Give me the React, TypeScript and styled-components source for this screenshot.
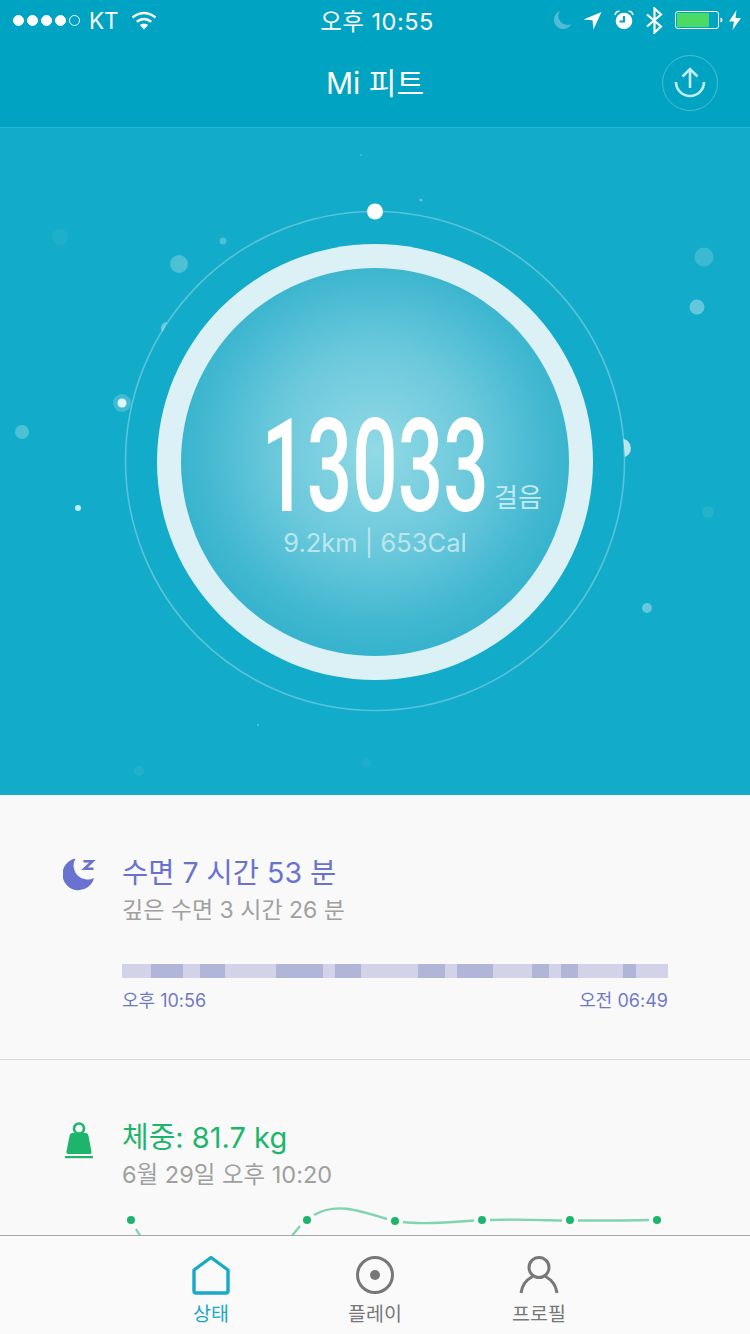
import React from "react";
import styled, { createGlobalStyle } from "styled-components";

const Global = createGlobalStyle`
  html, body { margin: 0; padding: 0; background: #f9f9f9; }
  * { box-sizing: border-box; }
  body { font-family: Inter, "Noto Sans CJK KR", "Liberation Sans", sans-serif; }
`;

const Page = styled.div`
  width: 750px; height: 1334px; display: flex; flex-direction: column; overflow: hidden; background: #f9f9f9;
`;
const Header = styled.header`
  height: 128px; background: #00a3c1; border-bottom: 1px solid #2fb6d2; color: #fff; flex: none;
`;
const StatusBar = styled.div`
  height: 40px; display: grid; grid-template-columns: 1fr auto 1fr; align-items: center; padding: 0 9px 0 13px;
  font-size: 23.5px;
`;
const StatusLeft = styled.div`display: flex; align-items: center;`;
const Signal = styled.div`display: flex; gap: 3px; margin-right: 9px;`;
const Dot = styled.span<{ $off?: boolean }>`
  width: 11px; height: 11px; border-radius: 50%;
  background: ${p => (p.$off ? "transparent" : "#fff")};
  border: 1px solid #fff;
`;
const Carrier = styled.span`margin-right: 12px; font-size: 22.5px;`;
const Clock = styled.div`letter-spacing: 0.5px;`;
const StatusRight = styled.div`display: flex; align-items: center; justify-content: flex-end;`;
const TitleRow = styled.div`
  height: 87px; position: relative; display: flex; align-items: center; justify-content: center; padding-bottom: 6px;
`;
const Title = styled.h1`margin: 0; font-size: 30px; font-weight: 400;`;
const UploadButton = styled.button`
  position: absolute; right: 32px; top: 15px; width: 56px; height: 56px; border-radius: 50%;
  border: 1px solid #4dbdd5; background: transparent; padding: 0; display: flex; align-items: center; justify-content: center;
`;

const Hero = styled.section`
  height: 667px; flex: none; background: #12abc9; position: relative; display: flex; align-items: center; justify-content: center;
`;
const Particles = styled.svg`position: absolute; inset: 0; width: 750px; height: 667px;`;
const Ring = styled.div`
  position: relative; width: 436px; height: 436px; border-radius: 50%; background: #dcf1f6; padding: 24px; margin-top: 1px;
`;
const Dial = styled.div`
  width: 388px; height: 388px; border-radius: 50%;
  background: radial-gradient(circle 205px at 50% 47%, #92d9e5 0%, #6ac8db 50%, #41b7d0 85%, #36b3cd 100%);
  display: flex; flex-direction: column; align-items: center; padding-top: 149px; color: #fff;
`;
const StepsRow = styled.div`
  width: 100%; display: grid; grid-template-columns: 1fr 224px 1fr; align-items: end; height: 100px;
`;
const Steps = styled.div`
  grid-column: 2; width: 224px; height: 100px; display: flex; justify-content: center; align-items: center;
  font-family: Roboto, sans-serif; font-weight: 500; font-size: 130px; line-height: 100px;
  transform: scaleX(0.615); white-space: nowrap;
`;
const StepsUnit = styled.div`
  font-size: 26px; color: #c5ebf2; padding-left: 7px; line-height: 30px; padding-bottom: 4px; white-space: nowrap;
`;
const Stats = styled.div`
  font-size: 25.5px; color: #bce6ee; margin-top: 11px; line-height: 30px; white-space: nowrap;
`;

const Content = styled.main`flex: 1; min-height: 0; overflow: hidden;`;
const Card = styled.article<{ $divider?: boolean }>`
  display: grid; grid-template-columns: 58px 1fr; padding: 60px 82px 0 64px;
  ${p => (p.$divider ? "border-bottom: 1px solid #d8d8d8; height: 265px;" : "")}
`;
const IconCell = styled.div`margin: 2px 0 0 -1px;`;
const CardTitle = styled.h2<{ $color: string; $size: number }>`
  margin: 0; font-size: ${p => p.$size}px; font-weight: 400; line-height: 36px; color: ${p => p.$color};
`;
const CardSub = styled.p<{ $size: number }>`
  margin: 3px 0 0; font-size: ${p => p.$size}px; line-height: 32px; color: #a0a0a0;
`;
const SleepBar = styled.div`display: flex; height: 14px; width: 546px; margin-top: 38px;`;
const SleepSeg = styled.span<{ $deep: boolean }>`
  display: block; background: ${p => (p.$deep ? "#b1b5d7" : "#d2d3e8")};
`;
const TimeRow = styled.div`
  width: 546px; display: flex; justify-content: space-between; margin-top: 11px;
  font-size: 18px; line-height: 24px; color: #7079c6;
`;
const ChartWrap = styled.div`grid-column: 1 / 3; margin: 14px 0 0 -64px;`;
const Chart = styled.svg`display: block; width: 750px; height: 60px;`;

const TabBar = styled.nav`
  height: 99px; flex: none; background: #fafafa; border-top: 1px solid #a8a8a8; display: flex; justify-content: center;
  padding-top: 19px;
`;
const Tab = styled.div<{ $active?: boolean }>`
  width: 164px; display: flex; flex-direction: column; align-items: center;
  color: ${p => (p.$active ? "#18a9c6" : "#777")};
`;
const TabLabel = styled.span`font-size: 19.5px; line-height: 26px; margin-top: 6px;`;

const PARTICLES: [number, number, number, string, number][] = [
  [60, 237, 8, "#fff", 0.05], [223, 241, 3.5, "#fff", 0.25], [179, 264, 9, "#fff", 0.25],
  [122, 403, 9, "#fff", 0.2], [122, 403, 4.5, "#fff", 0.85], [22, 432, 7, "#fff", 0.25],
  [78, 508, 3, "#c8f3fa", 0.95], [704, 257, 9.5, "#fff", 0.18], [697, 307, 7.5, "#fff", 0.35],
  [708, 512, 6, "#fff", 0.08], [647, 608, 5, "#fff", 0.35], [421, 200, 1.5, "#fff", 0.35],
  [361, 155, 0.8, "#fff", 0.4], [258, 725, 0.8, "#fff", 0.6], [139, 771, 5, "#fff", 0.07],
  [366, 763, 5, "#fff", 0.04],
];

const SLEEP = [
  [29, 0], [32, 1], [17, 0], [25, 1], [51, 0], [47, 1], [12, 0], [26, 1], [57, 0], [27, 1], [12, 0],
  [36, 1], [39, 0], [17, 1], [12, 0], [17, 1], [45, 0], [13, 1], [32, 0],
];

const MoonIcon = () => (
  <svg width="34" height="34" viewBox="0 0 34 34" style={{ display: "block" }}>
    <path d="M12.5 1.5 A16 16 0 1 0 31 21 A14 14 0 0 1 12.5 1.5 Z" fill="#6a72cf" />
    <path d="M20.5 4.2 H29.5 L21.5 11.8 H30.5" fill="none" stroke="#6a72cf" strokeWidth="2.6" />
  </svg>
);
const WeightIcon = () => (
  <svg width="30" height="38" viewBox="0 0 30 38" style={{ display: "block", marginLeft: 2 }}>
    <circle cx="14" cy="6.5" r="5" fill="none" stroke="#1db56c" strokeWidth="2.6" />
    <path d="M7.5 11 H20.5 Q23 11 23.5 14 L26.5 29.5 Q27 32 24.5 32 H3.5 Q1 32 1.5 29.5 L4.5 14 Q5 11 7.5 11 Z" fill="#1db56c" />
    <rect x="0" y="34" width="28" height="2.2" fill="#1db56c" />
  </svg>
);

export default function App() {
  return (
    <Page>
      <Global />
      <Header>
        <StatusBar>
          <StatusLeft>
            <Signal>
              <Dot /><Dot /><Dot /><Dot /><Dot $off />
            </Signal>
            <Carrier>KT</Carrier>
            <svg width="26" height="20" viewBox="0 0 26 20" style={{ marginTop: 2 }}>
              <path d="M13 18.5 L8.8 14 Q13 10.8 17.2 14 Z" fill="#fff" />
              <path d="M5.8 10.8 Q13 5 20.2 10.8" fill="none" stroke="#fff" strokeWidth="2.4" />
              <path d="M1.5 6.5 Q13 -2.4 24.5 6.5" fill="none" stroke="#fff" strokeWidth="2.4" />
            </svg>
          </StatusLeft>
          <Clock>오후 10:55</Clock>
          <StatusRight>
            <svg width="20" height="20" viewBox="0 0 20 20" style={{ marginRight: 11 }}>
              <path d="M8 1 A9.3 9.3 0 1 0 19.5 14 A9 9 0 0 1 8 1 Z" fill="#4fbcd6" />
            </svg>
            <svg width="19" height="19" viewBox="0 0 19 19" style={{ marginRight: 12 }}>
              <path d="M18.5 1 L10.5 18.5 L9.5 9.3 L0.5 8.5 Z" fill="#fff" />
            </svg>
            <svg width="20" height="20" viewBox="0 0 20 20" style={{ marginRight: 12 }}>
              <circle cx="10" cy="11" r="8.3" fill="#fff" />
              <path d="M10 6 V11.5 H5.5" fill="none" stroke="#00a3c1" strokeWidth="2" />
              <path d="M1 5 Q2 1 5.5 1.2 M19 5 Q18 1 14.5 1.2" fill="none" stroke="#fff" strokeWidth="1.6" />
            </svg>
            <svg width="17" height="27" viewBox="0 0 17 27" style={{ marginRight: 12 }}>
              <path d="M1 7.5 L15 19.5 L8.5 25.5 V1.5 L15 7.5 L1 19.5" fill="none" stroke="#fff" strokeWidth="2.2" />
            </svg>
            <svg width="49" height="20" viewBox="0 0 49 20" style={{ marginRight: 5 }}>
              <rect x="0.5" y="1.5" width="43" height="17" rx="2.5" fill="none" stroke="#fff" strokeWidth="1" />
              <rect x="2" y="3" width="32" height="14" fill="#4cd964" />
              <path d="M45.5 7.5 Q47.5 8 47.5 10 Q47.5 12 45.5 12.5 Z" fill="#fff" />
            </svg>
            <svg width="12" height="20" viewBox="0 0 12 20">
              <path d="M7.5 0 L0 11.5 H5 L3.5 20 L12 8 H6.5 Z" fill="#fff" />
            </svg>
          </StatusRight>
        </StatusBar>
        <TitleRow>
          <Title>Mi 피트</Title>
          <UploadButton aria-label="업로드">
            <svg width="34" height="34" viewBox="0 0 34 34" fill="none" stroke="#c3ecf4" strokeWidth="2.6">
              <path d="M3 16 A14 14 0 0 0 31 16" />
              <path d="M17 22 V3 M9.5 10.5 L17 3 L24.5 10.5" />
            </svg>
          </UploadButton>
        </TitleRow>
      </Header>

      <Hero>
        <Particles viewBox="0 128 750 667">
          <circle cx="375" cy="461" r="249.5" fill="none" stroke="#58c3da" strokeWidth="1.6" />
          {PARTICLES.map(([x, y, r, c, o], i) => (
            <circle key={i} cx={x} cy={y} r={r} fill={c} fillOpacity={o} />
          ))}
          <path d="M623.5 439 A9.5 9.5 0 0 1 625 457 Z" fill="#fff" fillOpacity="0.7" />
          <path d="M167 322 A6 6 0 0 0 162.5 332 Z" fill="#fff" fillOpacity="0.35" />
          <circle cx="375" cy="211.5" r="8" fill="#fff" />
        </Particles>
        <Ring>
          <Dial>
            <StepsRow>
              <Steps>13033</Steps>
              <StepsUnit>걸음</StepsUnit>
            </StepsRow>
            <Stats>9.2km | 653Cal</Stats>
          </Dial>
        </Ring>
      </Hero>

      <Content>
        <Card $divider>
          <IconCell><MoonIcon /></IconCell>
          <div>
            <CardTitle $color="#6a72cf" $size={28.5}>수면 7 시간 53 분</CardTitle>
            <CardSub $size={23}>깊은 수면 3 시간 26 분</CardSub>
            <SleepBar>
              {SLEEP.map(([w, d], i) => (
                <SleepSeg key={i} $deep={!!d} style={{ width: w }} />
              ))}
            </SleepBar>
            <TimeRow><span>오후 10:56</span><span>오전 06:49</span></TimeRow>
          </div>
        </Card>
        <Card>
          <IconCell><WeightIcon /></IconCell>
          <div>
            <CardTitle $color="#1db56c" $size={29}>체중: 81.7 kg</CardTitle>
            <CardSub $size={23.5}>6월 29일 오후 10:20</CardSub>
          </div>
          <ChartWrap>
            <Chart viewBox="0 1205 750 60">
              <g fill="none" stroke="#7fd5ad" strokeWidth="2.4">
                <path d="M136 1229 Q145 1245 160 1255" />
                <path d="M270 1262 Q282 1248 300 1226" />
                <path d="M314 1215 C335 1203 355 1209 387 1219" />
                <path d="M403 1222 C425 1225 450 1222 474 1220.5" />
                <path d="M490 1220 C515 1219 540 1220 562 1220.5" />
                <path d="M578 1220.5 C600 1220.5 630 1220.5 649 1220" />
              </g>
              {[[131, 1220], [307, 1220], [395, 1221], [482, 1220], [570, 1220], [657, 1220]].map(([x, y]) => (
                <circle key={x} cx={x} cy={y} r="4" fill="#1db56c" />
              ))}
            </Chart>
          </ChartWrap>
        </Card>
      </Content>

      <TabBar>
        <Tab $active>
          <svg width="40" height="40" viewBox="0 0 40 40" fill="none" stroke="#18a9c6" strokeWidth="3.4" strokeLinejoin="round">
            <path d="M20 2.5 L37 15 V36 Q37 38 35 38 H5 Q3 38 3 36 V15 Z" />
          </svg>
          <TabLabel>상태</TabLabel>
        </Tab>
        <Tab>
          <svg width="40" height="40" viewBox="0 0 40 40" fill="none" stroke="#777" strokeWidth="3">
            <circle cx="20" cy="20" r="17.5" />
            <circle cx="20" cy="20" r="5" fill="#777" stroke="none" />
          </svg>
          <TabLabel>플레이</TabLabel>
        </Tab>
        <Tab>
          <svg width="40" height="40" viewBox="0 0 40 40" fill="none" stroke="#777" strokeWidth="3">
            <circle cx="20" cy="12.5" r="10" />
            <path d="M2 38 C3 30 8 24.5 13.5 21.5 M26.5 21.5 C32 24.5 37 30 38 38" />
          </svg>
          <TabLabel>프로필</TabLabel>
        </Tab>
      </TabBar>
    </Page>
  );
}
